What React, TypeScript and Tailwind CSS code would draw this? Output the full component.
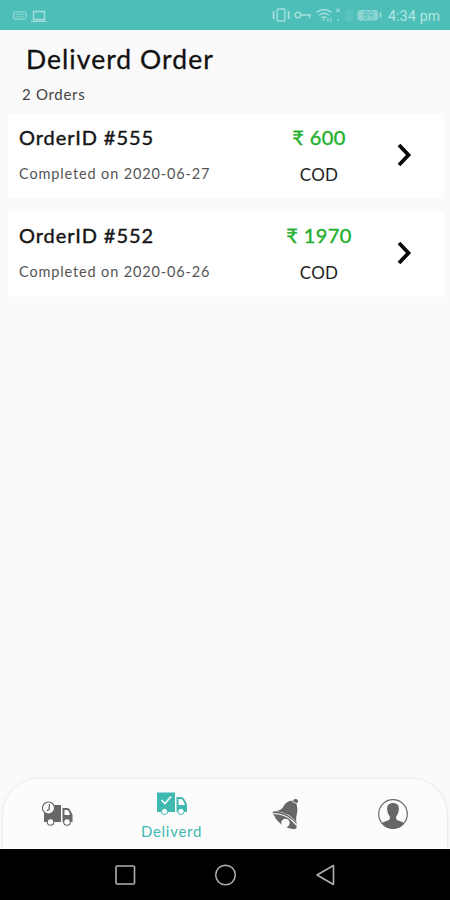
type Order = {
  id: number;
  date: string;
  amount: number;
  payment: string;
};

const orders: Order[] = [
  { id: 555, date: "2020-06-27", amount: 600, payment: "COD" },
  { id: 552, date: "2020-06-26", amount: 1970, payment: "COD" },
];

function StatusBar() {
  return (
    <header className="flex h-[30px] shrink-0 items-center justify-between bg-[#4dbfb8] pl-3 pr-[8px] text-[#a6e0dc]">
      <svg width="36" height="14" viewBox="0 0 36 14" fill="none" stroke="currentColor" className="mt-0.5">
        <rect x="1.5" y="3" width="12.5" height="7" rx="1.5" />
        <path d="M3.5 5.5h8.5M3.5 7.7h8.5" strokeDasharray="1.5 1" />
        <path d="M21.5 2.5h11v8h-11zM19 12.3h15.5" strokeWidth="1.3" />
      </svg>
      <div className="flex items-center">
        <svg width="111" height="18" viewBox="0 0 111 18" fill="none" stroke="currentColor" strokeWidth="1.4">
          <rect x="5.2" y="3" width="7.6" height="12" rx="1" />
          <path d="M1.6 5v8M16.6 5v8" strokeWidth="1.8" />
          <circle cx="26" cy="9" r="2.8" />
          <path d="M29 9h10M37.5 9v3.5" />
          <path d="M44.5 6.5Q52 .5 59.5 6.5M47 9.3Q52 5.3 57 9.3M49.5 12Q52 10 54.5 12" />
          <path d="M52 15l-1.5-2h3z" fill="currentColor" stroke="none" />
          <path d="M56 12v4M59 12v4" strokeWidth="1" />
          <path d="M64.5 3l3 3M67.5 3l-3 3M66 13v2" strokeWidth="1.1" />
          <rect x="73" y="4" width="8" height="11" fill="currentColor" stroke="none" opacity=".15" />
          <rect x="85.5" y="4" width="20.5" height="10.5" rx="2" fill="currentColor" opacity=".7" stroke="none" />
          <path d="M108.5 6.5v5" strokeWidth="1.6" />
          <text x="90.5" y="12.7" fontSize="10" fontFamily="Roboto, sans-serif" fill="#4dbfb8" stroke="none">89</text>
        </svg>
        <span className="ml-[5px] mt-0.5 w-[54px] whitespace-nowrap font-['Roboto',sans-serif] text-[14px] leading-4 tracking-[0.25px] text-[#b4e6e2]">4:34 pm</span>
      </div>
    </header>
  );
}

function OrderCard({ order }: { order: Order }) {
  return (
    <li className="flex h-[86px] items-center bg-white pl-[11px] pr-[32px] shadow-[0_0_2px_rgba(0,0,0,0.02)]">
      <div className="-mt-[3px] flex w-[246px] flex-col">
        <span className="text-[20px] leading-6 tracking-[0.92px] text-[#151515] [-webkit-text-stroke:0.4px_#151515]">OrderID #{order.id}</span>
        <span className="mt-[15px] text-[14.5px] leading-5 tracking-[0.86px] text-[#555]">Completed on {order.date}</span>
      </div>
      <div className="-mt-[3px] flex w-[108px] flex-col items-center">
        <span className="text-[20px] leading-6 tracking-[0.4px] text-[#22b02c] [-webkit-text-stroke:0.4px_#22b02c]">₹ {order.amount}</span>
        <span className="mt-[16px] text-[17px] leading-[19px] tracking-[0.2px] text-[#222]">{order.payment}</span>
      </div>
      <svg width="16" height="24" viewBox="0 0 16 24" fill="none" stroke="#080808" strokeWidth="3.8" className="-mt-0.5 ml-auto">
        <path d="M3 2L12.5 12L3 22" />
      </svg>
    </li>
  );
}

function PendingTruckIcon() {
  return (
    <svg width="32" height="26" viewBox="0 0 32 26" fill="#676767">
      <path d="M2 4h17v17H2zM20.5 7H25q2.5 0 3.5 3l2 3.5V21h-10z" />
      <path d="M22.5 9H25q1.5 0 2 2l1 3h-5.5z" fill="#fcfcfc" />
      <circle cx="6.5" cy="7" r="6" fill="#fcfcfc" stroke="#676767" strokeWidth="1.1" />
      <path d="M7.5 3L7 8.5L4.8 9.6" fill="none" stroke="#676767" strokeWidth="1.3" />
      <circle cx="8.5" cy="21" r="3.3" fill="#fcfcfc" stroke="#676767" strokeWidth="1.1" />
      <circle cx="25" cy="21" r="3.3" fill="#fcfcfc" stroke="#676767" strokeWidth="1.1" />
    </svg>
  );
}

function DeliveredTruckIcon() {
  return (
    <svg width="32" height="24" viewBox="0 0 32 24" fill="#40b9b1">
      <path d="M1 .5h18V20H1zM20.5 5H25q2.5 0 4 3.5l2 3.5v8H20.5z" />
      <path d="M22.5 7H25q1.5 0 2.5 2.5l1.5 3.5h-6.5z" fill="#fcfcfc" />
      <path d="M5.5 8L9 11.5L15 4.5" fill="none" stroke="#fcfcfc" strokeWidth="1.6" />
      <circle cx="8.5" cy="19.5" r="3.1" fill="#fcfcfc" stroke="#40b9b1" strokeWidth="1" />
      <circle cx="25" cy="19.5" r="3.1" fill="#fcfcfc" stroke="#40b9b1" strokeWidth="1" />
    </svg>
  );
}

function BellIcon() {
  return (
    <svg width="30" height="32" viewBox="0 0 30 32" fill="#676767">
      <path d="M22 3q.5-2.5 3-2t2 3l-1.5 1.5q1.5 5 .5 10-1.5 5-.7 8.5Q18 14.5 5 13q5.500-.5 8-5.500Q17 2 22 3z" />
      <path d="M1.5 14q1.5-1 5.500-.5Q18 15.5 25.5 24.5V30q-.5 1.5-4 1Q7 28.5 1.500 14z" />
      <path d="M2.5 15.5Q16 15.5 25.5 27" fill="none" stroke="#fcfcfc" strokeWidth="1.2" />
      <circle cx="14.5" cy="25" r="4.2" fill="#fcfcfc" />
      <path d="M21.5 3.8l5 2" stroke="#fcfcfc" strokeWidth=".8" />
    </svg>
  );
}

function ProfileIcon() {
  return (
    <svg width="32" height="32" viewBox="0 0 32 32">
      <circle cx="16" cy="16" r="14.3" fill="none" stroke="#676767" strokeWidth="1.2" />
      <path d="M16 5c4.7 0 6.3 3 5.8 7-.3 3-1.3 5-2.6 6.3V21c1.2 2.3 5.5 1.8 8 4.5a14.3 14.3 0 0 1-22.4 0c2.5-2.7 6.8-2.2 8-4.5v-2.7c-1.3-1.3-2.3-3.3-2.6-6.3C9.7 8 11.3 5 16 5z" fill="#676767" />
    </svg>
  );
}

function TabBar() {
  return (
    <nav className="mx-[3px] flex h-[71px] shrink-0 rounded-t-[36px] border-t border-[#f2f2f2] bg-[#fcfcfc] shadow-[0_1px_3px_rgba(0,0,0,0.18)]">
      <button className="flex w-[109px] items-center justify-center">
        <PendingTruckIcon />
      </button>
      <button className="flex w-[119px] flex-col items-center pt-[13px]">
        <DeliveredTruckIcon />
        <span className="mt-[6px] text-[15px] leading-[18px] tracking-[0.7px] text-[#40b9b1]">Deliverd</span>
      </button>
      <button className="flex w-[108px] items-center justify-center pl-[2px]">
        <BellIcon />
      </button>
      <button className="flex w-[108px] items-center justify-center">
        <ProfileIcon />
      </button>
    </nav>
  );
}

function SystemNav() {
  return (
    <footer className="z-10 flex h-[51px] shrink-0 items-center justify-center gap-[76px] bg-black">
      <svg width="24" height="24" viewBox="0 0 24 24" fill="none" stroke="#b0b0b0" strokeWidth="1.6">
        <rect x="3" y="3" width="18.5" height="18" rx="1" />
      </svg>
      <svg width="24" height="24" viewBox="0 0 24 24" fill="none" stroke="#b0b0b0" strokeWidth="1.5">
        <circle cx="12.5" cy="12" r="9.8" />
      </svg>
      <svg width="24" height="24" viewBox="0 0 24 24" fill="none" stroke="#b0b0b0" strokeWidth="1.6" strokeLinejoin="round">
        <path d="M4 12L20.5 2.5v19z" />
      </svg>
    </footer>
  );
}

export default function App() {
  return (
    <div className="flex h-[900px] w-[450px] flex-col overflow-hidden bg-[#fafafa] font-['Lato','Noto_Sans',sans-serif]">
      <StatusBar />
      <main className="flex-1">
        <h1 className="pl-[26px] pt-[13px] text-[26.5px] leading-8 tracking-[1.05px] text-[#111] [-webkit-text-stroke:0.3px_#111]">Deliverd Order</h1>
        <p className="pl-[22px] pt-[9px] text-[15px] leading-5 tracking-[0.7px] text-[#444]">{orders.length} Orders</p>
        <ul className="ml-2 mr-[6px] mt-[9px] flex flex-col gap-3">
          {orders.map((order) => (
            <OrderCard key={order.id} order={order} />
          ))}
        </ul>
      </main>
      <TabBar />
      <SystemNav />
    </div>
  );
}
